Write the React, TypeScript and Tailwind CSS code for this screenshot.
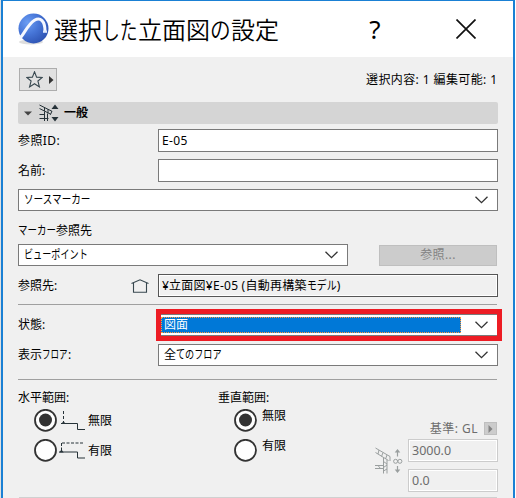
import React from 'react';
import { clsx } from 'clsx';

const FONT = "font-['Noto_Sans','Noto_Sans_CJK_JP',sans-serif]";

interface TextProps {
  children?: React.ReactNode;
  className?: string;
}

// Dialog text, always on one line
function Text({ children, className }: TextProps) {
  return <span className={clsx('whitespace-pre', className)}>{children}</span>;
}

// Kana are set narrower than the kanji around them
function Kana({ children, className }: TextProps) {
  return (
    <span className={clsx('inline-block origin-left whitespace-pre', className)}>{children}</span>
  );
}

function Chevron() {
  return (
    <svg width="13" height="8" viewBox="0 0 13 8" className="shrink-0" fill="none" stroke="#333" strokeWidth="1.3">
      <path d="M0.5 0.7 6.5 6.7 12.5 0.7" />
    </svg>
  );
}

function Select({ children, className }: TextProps) {
  return (
    <div className={clsx('flex h-[22px] items-center justify-between border border-[#7a7a7a] bg-white pl-[5px] pr-[9px]', className)}>
      {children}
      <Chevron />
    </div>
  );
}

function Radio({ checked }: { checked?: boolean }) {
  return (
    <svg width="23" height="23" viewBox="0 0 23 23" className="shrink-0">
      <circle cx="11.5" cy="11.3" r="10.5" fill="#fff" stroke="#333" strokeWidth="1.8" />
      {checked && <circle cx="11.5" cy="11" r="6.5" fill="#333" />}
    </svg>
  );
}

function Logo() {
  return (
    <svg width="32" height="34" viewBox="0 0 32 34" className="shrink-0">
      <defs>
        <radialGradient id="ball" cx="30%" cy="30%" r="75%">
          <stop offset="0" stopColor="#6b9df3" />
          <stop offset="0.5" stopColor="#4776d8" />
          <stop offset="1" stopColor="#2f55b5" />
        </radialGradient>
      </defs>
      <ellipse cx="14" cy="30" rx="12" ry="2.5" fill="#dedede" />
      <circle cx="16.5" cy="16.5" r="15" fill="url(#ball)" />
      <path
        d="M3 26C7 22.5 10.5 12.5 17.5 8.2C23.5 4.8 28 9 28 19"
        fill="none"
        stroke="#f4f7ff"
        strokeWidth="3"
      />
      <path d="M26 18.5h4v2.3h-4z" fill="#dfe8fc" />
    </svg>
  );
}

function ElevationIcon() {
  return (
    <svg width="20" height="18" viewBox="0 0 20 18" className="shrink-0" fill="none" stroke="#263238">
      <path d="M0.5 1 13 7.3M0.5 4.5 12 10.4M13 7 11.5 10.5M5.5 3.5V7M9 5.2V9M0.5 10.5H6M0.5 14.5H9.5M5.5 7.5V17M8.5 9.5V17" />
      <path d="M16 0.5 19.5 5H12.5ZM16 17.5 19.5 13H12.5Z" fill="#263238" stroke="none" />
    </svg>
  );
}

function RangeIcon() {
  return (
    <svg width="28" height="27" viewBox="0 0 28 27" className="shrink-0" fill="none" stroke="#9a9f9f">
      <path d="M0.5 1 15 9.5M0.5 5.5 13.5 13.5M15 9.5V14M4 3 3 7M8 5.5 6.5 9.5M12 8 10.5 12M0 18.5H8.5M0 21.5H8.5M8.5 11V26.5M12 13V26.5M8.5 14.5 12 17M8.5 20.5 12 18M8.5 24 12 22M3 18.5 5.5 21.5" />
      <path d="M22.5 9.5V4M22.5 19V24" strokeWidth="1.2" />
      <path d="M22.5 2 25.3 5.5H19.7ZM22.5 26 25.3 22.5H19.7Z" fill="#9a9f9f" stroke="none" />
      <circle cx="20.6" cy="14.3" r="2" />
      <circle cx="24.9" cy="14.3" r="2" />
    </svg>
  );
}

function HorizontalRangeIcon({ limited }: { limited?: boolean }) {
  return (
    <svg width="26" height="22" viewBox="0 0 26 22" className="shrink-0" fill="none" stroke="#263238">
      {limited ? (
        <>
          <path d="M2.5 3V10M3 3H25" strokeDasharray="3 1.5" />
          <path d="M0 12H18.5V18H26" />
          <path d="M0.3 12.5 2.5 9.5 4.7 12.5Z" fill="#263238" stroke="none" />
        </>
      ) : (
        <>
          <path d="M2.5 1V12" strokeDasharray="3 2" />
          <path d="M0 13.5H16.5V19.5H24" />
          <path d="M0.3 14 2.5 11 4.7 14Z" fill="#263238" stroke="none" />
        </>
      )}
    </svg>
  );
}

function TitleBar() {
  return (
    <div className="flex h-14 items-center bg-white pl-[14px]">
      <Logo />
      <div className="ml-[5px] flex w-[225px] text-[24px] font-[350] leading-none [font-family:'Noto_Sans_CJK_JP',sans-serif]">
        <Text>選択</Text>
        <Kana className="w-9 scale-x-[0.74]">した</Kana>
        <Text>立面図</Text>
        <Kana className="w-[21px] scale-x-[0.86]">の</Kana>
        <Text>設定</Text>
      </div>
      <Text className="ml-[88px] w-4 text-center text-[26px] leading-none text-black">?</Text>
      <svg width="20" height="20" viewBox="0 0 20 20" className="ml-[73px] shrink-0" stroke="#111" strokeWidth="1.7">
        <path d="M0.5 0.5 19.5 19.5M19.5 0.5 0.5 19.5" />
      </svg>
    </div>
  );
}

export default function App() {
  return (
    <div className={clsx('flex h-[498px] w-[516px] overflow-hidden border-l border-r border-l-[#e0e0e0] border-r-white text-[12px] leading-[18px] text-black', FONT)}>
      <div className="flex w-[514px] flex-col border-x-2 border-t border-[#1a80d4] bg-[#f0f0f0]">
        <TitleBar />

        <div className="flex flex-col pl-[15px] pr-[15px]">
          <div className="mt-[11px] flex h-[23px] items-center justify-between">
            <div className="ml-px flex h-[23px] w-[38px] items-center border border-[#adadad] bg-[#e1e1e1] pl-[6px]">
              <svg width="17" height="17" viewBox="0 0 17 17" fill="none" stroke="#37474f" strokeWidth="1.1">
                <path d="M8.5 0.8 10.6 6.1 16.3 6.4 11.9 10 13.4 15.9 8.5 12.7 3.6 15.9 5.1 10 0.7 6.4 6.4 6.1Z" />
              </svg>
              <svg width="5" height="8" viewBox="0 0 5 8" className="ml-[6px]">
                <path d="M0 0 4.5 4 0 8Z" fill="#333" />
              </svg>
            </div>
            <Text className="w-[132px] tracking-[0.4px]">選択内容: 1 編集可能: 1</Text>
          </div>

          <div className="mt-[11px] flex h-[22px] items-center rounded-[2px] bg-[#d5d5d5] pl-[6px]">
            <svg width="8" height="5" viewBox="0 0 8 5">
              <path d="M0 0.5H8L4 4.5Z" fill="#444" />
            </svg>
            <div className="ml-[7px]">
              <ElevationIcon />
            </div>
            <Text className="ml-[5px] font-bold">一般</Text>
          </div>

          <div className="mt-[5px] flex items-center">
            <Text className="w-[140px] tracking-[0.4px]">参照ID:</Text>
            <div className="flex h-[23px] w-[340px] items-center border border-[#7a7a7a] bg-white pl-[3px]">
              <Text className="tracking-[0.4px]">E-05</Text>
            </div>
          </div>
          <div className="mt-[7px] flex items-center">
            <Text className="w-[140px]">名前:</Text>
            <div className="h-[23px] w-[340px] border border-[#7a7a7a] bg-white" />
          </div>
          <Select className="mt-[7px] w-[480px]">
            <Kana className="scale-x-[0.8]">ソースマーカー</Kana>
          </Select>

          <div className="mt-[11px] flex h-[18px]">
            <Kana className="w-[38px] scale-x-[0.79]">マーカー</Kana>
            <Text>参照先</Text>
          </div>
          <div className="mt-1 flex items-center">
            <Select className="w-[330px]">
              <Kana className="scale-x-[0.76]">ビューポイント</Kana>
            </Select>
            <div className="ml-[31px] flex h-[21px] w-[118px] items-center justify-center border border-[#bfbfbf] bg-[#ccc] text-[#838383]">
              <Text className="tracking-[0.4px]">参照...</Text>
            </div>
          </div>

          <div className="mt-2 flex items-center">
            <Text className="w-[113px]">参照先:</Text>
            <svg width="18" height="14" viewBox="0 0 18 14" fill="none" stroke="#37474f" strokeWidth="1.1">
              <path d="M0.5 4.5 9 0.8 17.5 4.5M2.5 4V13.3H15.5V4" />
            </svg>
            <div className="ml-[9px] flex h-[23px] w-[340px] items-center border border-[#555] bg-[#f0f0f0] pl-[3px] shadow-[inset_0_0_0_1px_#fff]">
              <Text className="tracking-[0.25px]">¥立面図¥E-05 (自動再構築</Text>
              <Kana className="w-[30px] scale-x-[0.82]">モデル</Kana>
              <Text>)</Text>
            </div>
          </div>

          <div className="mt-[7px] h-px w-[479px] bg-[#a0a0a0]" />

          <div className="mt-1 -mr-1 flex h-8 items-center">
            <Text className="w-[138px]">状態:</Text>
            <div className="h-8 w-[346px] border-5 border-[#ed1c24]">
              <div className="flex h-[22px] items-center justify-between border-y border-[#7a7a7a] bg-white pr-[9px]">
                <div className="flex h-4 w-[300px] items-center border border-dotted border-[#ff9a3c] bg-[#0078d7] pl-[2px] text-white">
                  <Text>図面</Text>
                </div>
                <Chevron />
              </div>
            </div>
          </div>

          <div className="mt-[3px] flex items-center">
            <div className="flex w-[140px]">
              <Text>表示</Text>
              <Kana className="w-[26px] scale-x-[0.71]">フロア</Kana>
              <Text>:</Text>
            </div>
            <Select className="w-[340px]">
              <div className="flex">
                <Text>全</Text>
                <Kana className="scale-x-[0.76]">てのフロア</Kana>
              </div>
            </Select>
          </div>

          <div className="mt-[13px] h-px w-[479px] bg-[#a0a0a0]" />

          <div className="mt-[9px] flex h-[108px]">
            <div className="w-[200px]">
              <Text className="block h-[20px]">水平範囲:</Text>
              <div className="flex h-[23px] items-center pl-4">
                <Radio checked />
                <div className="ml-1">
                  <HorizontalRangeIcon />
                </div>
                <Text className="ml-px">無限</Text>
              </div>
              <div className="mt-[7px] flex h-[23px] items-center pl-4">
                <Radio />
                <div className="ml-[2px]">
                  <HorizontalRangeIcon limited />
                </div>
                <Text className="ml-[3px]">有限</Text>
              </div>
            </div>

            <div className="w-[157px]">
              <Text className="block h-[20px]">垂直範囲:</Text>
              <div className="flex h-[23px] items-start pl-4">
                <Radio checked />
                <Text className="-mt-[2px] ml-[5px]">無限</Text>
              </div>
              <div className="mt-[7px] flex h-[23px] items-start pl-4">
                <Radio />
                <Text className="-mt-[2px] ml-[5px]">有限</Text>
              </div>
            </div>

            <div className="flex w-[123px] flex-col text-[#6d6d6d]">
              <div className="mt-[33px] flex h-[13px] items-center justify-end">
                <Text className="tracking-[0.5px]">基準: GL</Text>
                <span className="ml-[6px] mr-px flex h-[13px] w-[13px] items-center justify-center border border-[#bfbfbf] bg-[#ccc]">
                  <svg width="5" height="8" viewBox="0 0 5 8">
                    <path d="M0.5 0 4.5 4 0.5 8Z" fill="#838383" />
                  </svg>
                </span>
              </div>
              <div className="mt-1 flex">
                <div className="mt-2 w-[33px]">
                  <RangeIcon />
                </div>
                <div className="flex flex-col gap-[7px] text-[12.5px]">
                  <div className="flex h-[23px] w-[90px] items-center border border-[#ccc] pl-[3px] shadow-[inset_0_0_0_1px_#fff]">
                    <Text>3000.0</Text>
                  </div>
                  <div className="flex h-[23px] w-[90px] items-center border border-[#ccc] pl-[3px] shadow-[inset_0_0_0_1px_#fff]">
                    <Text>0.0</Text>
                  </div>
                </div>
              </div>
            </div>
          </div>

          <div className="ml-px h-px w-[478px] bg-[#d0d0d0]" />
        </div>
      </div>
    </div>
  );
}
